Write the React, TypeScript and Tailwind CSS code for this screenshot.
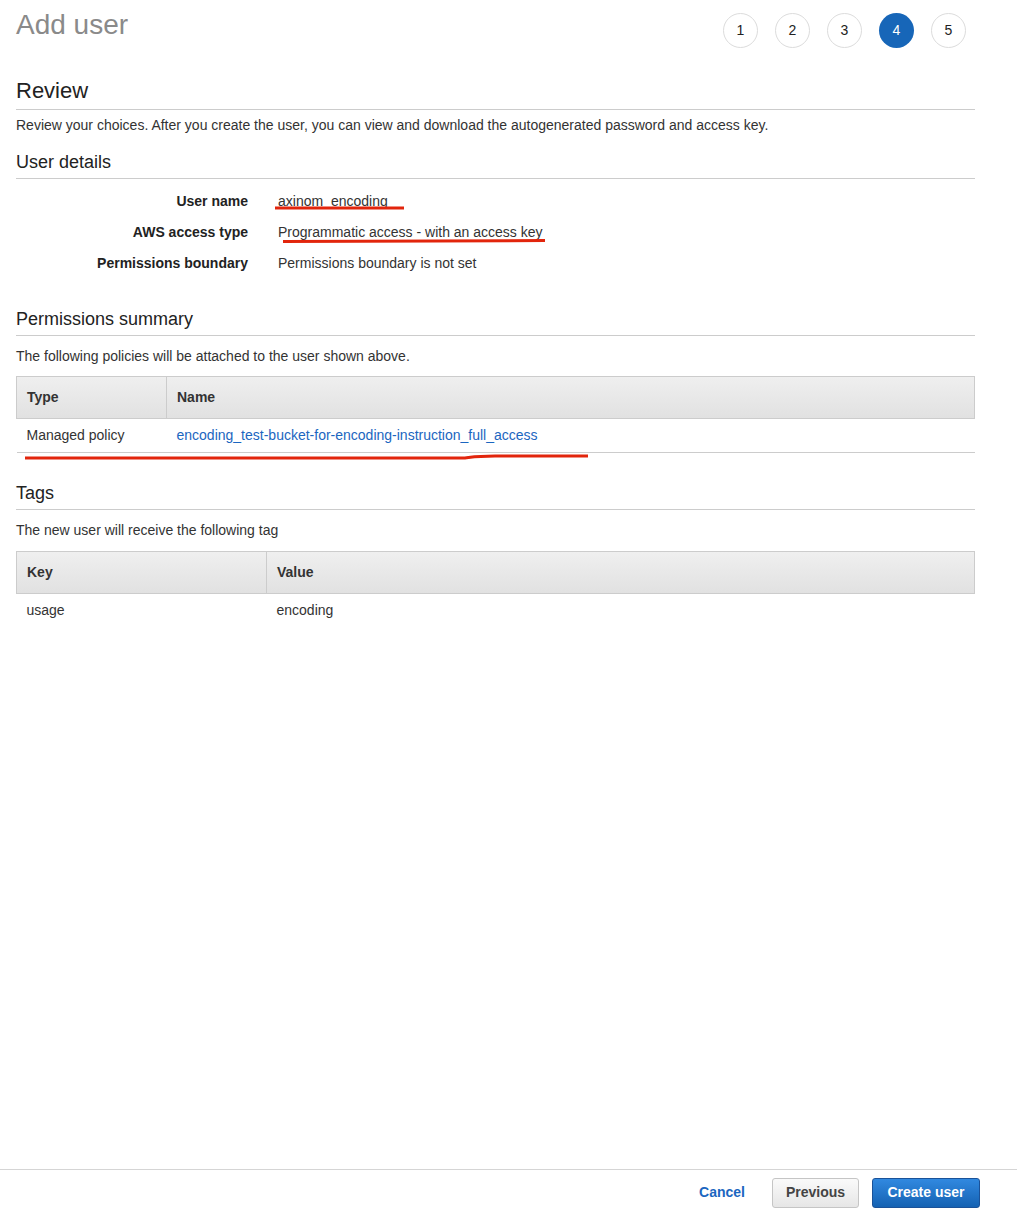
import React from 'react';

const font = { fontFamily: '"Liberation Sans", Arial, sans-serif' };

function Steps() {
    const steps = [1, 2, 3, 4, 5];
    return (
        <div className="flex gap-[17px] mt-[13px] mr-[9px]">
            {steps.map((s) => (
                <div
                    key={s}
                    className={
                        s === 4
                            ? 'w-[35px] h-[35px] rounded-full bg-[#1766b8] text-white text-[14px] flex items-center justify-center'
                            : 'w-[35px] h-[35px] rounded-full border border-[#dcdcdc] text-[#222] text-[14px] flex items-center justify-center'
                    }
                >
                    {s}
                </div>
            ))}
        </div>
    );
}

function SectionTitle({ children, big }: { children: React.ReactNode; big?: boolean }) {
    return (
        <h2
            className={
                big
                    ? 'text-[22px] leading-[26px] text-[#222] border-b border-[#ccc] pb-[5px]'
                    : 'text-[18px] leading-[22px] text-[#222] border-b border-[#ccc] pb-[5px]'
            }
        >
            {children}
        </h2>
    );
}

function RedMark({ className, d, w, h }: { className: string; d: string; w: number; h: number }) {
    return (
        <svg className={'absolute pointer-events-none ' + className} width={w} height={h} viewBox={`0 0 ${w} ${h}`}>
            <path d={d} stroke="#e2250c" strokeWidth="3" fill="none" strokeLinecap="butt" />
        </svg>
    );
}

export default function App() {
    return (
        <div className="min-h-[1215px] flex flex-col bg-white text-[14px] text-[#333]" style={font}>
            <div className="flex-1 pl-4 pr-[42px]">
                <div className="flex justify-between items-start">
                    <h1 className="text-[28px] leading-[32px] text-[#8a8a8a] mt-[9px]">Add user</h1>
                    <Steps />
                </div>

                <div className="mt-[30px]">
                    <SectionTitle big>Review</SectionTitle>
                    <p className="mt-[7px] leading-[17px] text-[#333]">
                        Review your choices. After you create the user, you can view and download the autogenerated password and access key.
                    </p>
                </div>

                <div className="mt-[17px]">
                    <SectionTitle>User details</SectionTitle>
                    <div className="relative mt-[12px] flex flex-col gap-[10px]">
                        <div className="flex">
                            <div className="w-[232px] text-right font-bold text-[#222]">User name</div>
                            <div className="pl-[30px]">axinom_encoding</div>
                        </div>
                        <div className="flex">
                            <div className="w-[232px] text-right font-bold text-[#222]">AWS access type</div>
                            <div className="pl-[30px]">Programmatic access - with an access key</div>
                        </div>
                        <div className="flex">
                            <div className="w-[232px] text-right font-bold text-[#222]">Permissions boundary</div>
                            <div className="pl-[30px]">Permissions boundary is not set</div>
                        </div>
                        <RedMark className="left-[259px] top-[14px]" w={130} h={6} d="M0 3 L129 3" />
                        <RedMark className="left-[267px] top-[47px]" w={263} h={6} d="M0 3.5 L262 2.5" />
                    </div>
                </div>

                <div className="mt-[34px]">
                    <SectionTitle>Permissions summary</SectionTitle>
                    <p className="mt-[12px] leading-[17px]">The following policies will be attached to the user shown above.</p>
                    <div className="relative mt-[11px]">
                        <table className="w-full border-collapse">
                            <thead>
                                <tr className="h-[42px] bg-gradient-to-b from-[#efefef] to-[#e1e1e1]">
                                    <th className="w-[150px] text-left font-bold text-[#333] px-[10px] border border-[#ccc]">Type</th>
                                    <th className="text-left font-bold text-[#333] px-[10px] border border-[#ccc]">Name</th>
                                </tr>
                            </thead>
                            <tbody>
                                <tr className="h-[34px] border-b border-[#ccc]">
                                    <td className="px-[10px]">Managed policy</td>
                                    <td className="px-[10px] text-[#1b66c0]">encoding_test-bucket-for-encoding-instruction_full_access</td>
                                </tr>
                            </tbody>
                        </table>
                        <RedMark
                            className="left-[9px] top-[78px]"
                            w={564}
                            h={6}
                            d="M0 4 L440 4 C448 3 452 2 470 2 L563 2"
                        />
                    </div>
                </div>

                <div className="mt-[29px]">
                    <SectionTitle>Tags</SectionTitle>
                    <p className="mt-[12px] leading-[17px]">The new user will receive the following tag</p>
                    <table className="w-full border-collapse mt-[12px]">
                        <thead>
                            <tr className="h-[42px] bg-gradient-to-b from-[#efefef] to-[#e1e1e1]">
                                <th className="w-[250px] text-left font-bold text-[#333] px-[10px] border border-[#ccc]">Key</th>
                                <th className="text-left font-bold text-[#333] px-[10px] border border-[#ccc]">Value</th>
                            </tr>
                        </thead>
                        <tbody>
                            <tr className="h-[34px]">
                                <td className="px-[10px]">usage</td>
                                <td className="px-[10px]">encoding</td>
                            </tr>
                        </tbody>
                    </table>
                </div>
            </div>

            <div className="border-t border-[#d5d5d5] h-[46px] flex items-center justify-end pr-[37px] gap-[27px]">
                <button className="font-bold text-[#1b66c0] text-[14px]">Cancel</button>
                <div className="flex gap-[13px]">
                    <button className="h-[30px] w-[87px] rounded-[3px] border border-[#c5c5c5] bg-gradient-to-b from-[#fafafa] to-[#e6e6e6] font-bold text-[#444]">
                        Previous
                    </button>
                    <button className="h-[30px] w-[108px] rounded-[3px] border border-[#1a5299] bg-gradient-to-b from-[#3189e0] to-[#1462b3] font-bold text-white">
                        Create user
                    </button>
                </div>
            </div>
        </div>
    );
}
